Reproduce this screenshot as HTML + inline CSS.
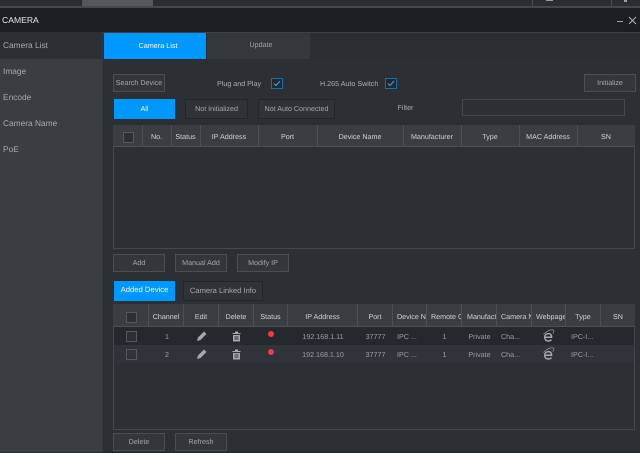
<!DOCTYPE html>
<html><head><meta charset="utf-8"><style>
html,body{margin:0;padding:0;background:#2c2f33}
body{width:640px;height:453px;position:relative;overflow:hidden;font-family:"Liberation Sans",sans-serif;font-size:7.15px;color:#acafb3;text-rendering:geometricPrecision}
div{position:absolute;box-sizing:border-box}
.t{white-space:nowrap;text-align:center;line-height:12px}
.b{border:1px solid #4a4d51;background:#33363a;text-align:center;color:#a4a7ac;white-space:nowrap}
.bl{background:#0098ff;color:#eef8ff;text-align:center;white-space:nowrap}
.s{left:3px;font-size:8.35px;color:#a6a9ad;line-height:12px}
.h{top:0;height:100%;background:#4c4f53;width:1px}
.c{height:12px;line-height:12px;text-align:center;white-space:nowrap;color:#d0d2d6;overflow:hidden}
.r{color:#9c9fa3;text-align:center;white-space:nowrap;line-height:12px;height:12px;overflow:hidden}
.cb{width:11px;height:11px;border:1px solid #55585c;background:#2c2f33}
.ck{width:12px;height:11px;border:1px solid #1b6da8;background:#24282c}
</style></head><body>
<div style="left:0;top:0;width:640px;height:6px;background:#2a2d31"></div>
<div style="left:82px;top:0;width:71px;height:6px;background:#56585c"></div>
<div style="left:532px;top:0;width:1px;height:6px;background:#4a4d51"></div>
<div style="left:611px;top:0;width:1px;height:6px;background:#4a4d51"></div>
<div style="left:546px;top:0;width:7px;height:1px;background:#9a9da0"></div>
<div style="left:624px;top:0;width:3px;height:2px;background:#9a9da0"></div>
<div style="left:0;top:6px;width:640px;height:2px;background:#44474b"></div>
<div style="left:0;top:8px;width:640px;height:24px;background:#1c1f22"></div>
<div class="t" style="left:2px;top:14px;font-size:8.6px;color:#e6e8ea">CAMERA</div>
<div style="left:617px;top:21px;width:6px;height:1px;background:#a0a2a5"></div>
<svg style="position:absolute;left:628px;top:16px" width="9" height="9" viewBox="0 0 9 9"><path d="M1 1L8 8M8 1L1 8" stroke="#a8aaad" stroke-width="1.1" fill="none"/></svg>

<div style="left:0;top:32px;width:102px;height:421px;background:#3a3d41"></div>
<div style="left:0;top:32px;width:102px;height:27px;background:#2c2f33"></div>
<div style="left:102px;top:32px;width:1px;height:421px;background:#33363a"></div>
<div class="s" style="top:39px">Camera List</div>
<div class="s" style="top:65px">Image</div>
<div class="s" style="top:91px">Encode</div>
<div class="s" style="top:117px">Camera Name</div>
<div class="s" style="top:143px">PoE</div>

<div style="left:103px;top:32px;width:537px;height:1px;background:#3e4145"></div>
<div style="left:103px;top:33px;width:537px;height:26px;background:#2a2d31"></div>
<div class="bl" style="left:104px;top:33px;width:102px;height:26px;line-height:25px;padding-left:6px;font-size:7.25px">Camera List</div>
<div style="left:207px;top:33px;width:103px;height:26px;background:#34373b;line-height:25px;text-align:center;color:#a0a3a7;padding-left:5px">Update</div>

<div class="b" style="left:113px;top:74px;width:52px;height:18px;line-height:17px">Search Device</div>
<div class="t" style="left:217px;top:78px;width:42px">Plug and Play</div>
<div class="ck" style="left:271px;top:78px"></div>
<svg style="position:absolute;left:271px;top:78px" width="12" height="11" viewBox="0 0 12 11"><path d="M3 5.5L5 7.5L9 3" stroke="#2a9ef0" stroke-width="1.2" fill="none"/></svg>
<div class="t" style="left:320px;top:78px;width:56px">H.265 Auto Switch</div>
<div class="ck" style="left:385px;top:78px"></div>
<svg style="position:absolute;left:385px;top:78px" width="12" height="11" viewBox="0 0 12 11"><path d="M3 5.5L5 7.5L9 3" stroke="#2a9ef0" stroke-width="1.2" fill="none"/></svg>
<div class="b" style="left:584px;top:74px;width:52px;height:18px;line-height:17px">Initialize</div>

<div class="bl" style="left:114px;top:99px;width:61px;height:20px;line-height:20px">All</div>
<div class="b" style="left:185px;top:99px;width:63px;height:20px;line-height:19px;background:#2f3236;border-color:#232629">Not Initialized</div>
<div class="b" style="left:258px;top:99px;width:77px;height:20px;line-height:19px;background:#2f3236;border-color:#232629">Not Auto Connected</div>
<div class="t" style="left:397px;top:102px;width:17px">Filter</div>
<div style="left:462px;top:99px;width:163px;height:17px;border:1px solid #44474b"></div>

<div style="left:113px;top:125px;width:522px;height:124px;border:1px solid #44474b"></div>
<div style="left:113px;top:125px;width:522px;height:22px;background:#3a3d41;border-bottom:1px solid #4c4f53">
<div class="h" style="left:29px"></div><div class="h" style="left:58px"></div><div class="h" style="left:87px"></div><div class="h" style="left:145px"></div><div class="h" style="left:204px"></div><div class="h" style="left:290px"></div><div class="h" style="left:348px"></div><div class="h" style="left:406px"></div><div class="h" style="left:464px"></div>
<div class="c" style="left:29px;top:6px;width:29px">No.</div>
<div class="c" style="left:58px;top:6px;width:29px">Status</div>
<div class="c" style="left:87px;top:6px;width:58px">IP Address</div>
<div class="c" style="left:145px;top:6px;width:59px">Port</div>
<div class="c" style="left:204px;top:6px;width:86px">Device Name</div>
<div class="c" style="left:290px;top:6px;width:58px">Manufacturer</div>
<div class="c" style="left:348px;top:6px;width:58px">Type</div>
<div class="c" style="left:406px;top:6px;width:58px">MAC Address</div>
<div class="c" style="left:464px;top:6px;width:58px">SN</div>
<div class="cb" style="left:10px;top:7px"></div>
</div>

<div class="b" style="left:113px;top:254px;width:52px;height:18px;line-height:16px">Add</div>
<div class="b" style="left:175px;top:254px;width:52px;height:18px;line-height:16px">Manual Add</div>
<div class="b" style="left:237px;top:254px;width:52px;height:18px;line-height:16px">Modify IP</div>
<div class="bl" style="left:114px;top:281px;width:61px;height:20px;line-height:18px;font-size:7.7px">Added Device</div>
<div class="b" style="left:183px;top:281px;width:80px;height:20px;line-height:17px;background:#2f3236;border-color:#232629;font-size:7.6px">Camera Linked Info</div>

<div style="left:113px;top:304px;width:522px;height:126px;border:1px solid #44474b"></div>
<div style="left:113px;top:304px;width:522px;height:23px;background:#3a3d41;border-bottom:1px solid #4c4f53">
<div class="h" style="left:35px"></div><div class="h" style="left:70px"></div><div class="h" style="left:105px"></div><div class="h" style="left:140px"></div><div class="h" style="left:174px"></div><div class="h" style="left:244px"></div><div class="h" style="left:279px"></div><div class="h" style="left:313px"></div><div class="h" style="left:348px"></div><div class="h" style="left:383px"></div><div class="h" style="left:418px"></div><div class="h" style="left:452px"></div><div class="h" style="left:487px"></div>
<div class="c" style="left:36px;top:7px;width:34px">Channel</div>
<div class="c" style="left:71px;top:7px;width:34px">Edit</div>
<div class="c" style="left:106px;top:7px;width:34px">Delete</div>
<div class="c" style="left:141px;top:7px;width:33px">Status</div>
<div class="c" style="left:175px;top:7px;width:69px">IP Address</div>
<div class="c" style="left:245px;top:7px;width:34px">Port</div>
<div class="c" style="left:280px;top:7px;width:33px;text-align:left;padding-left:4px">Device Name</div>
<div class="c" style="left:314px;top:7px;width:34px;text-align:left;padding-left:4px">Remote Channel</div>
<div class="c" style="left:349px;top:7px;width:34px;text-align:left;padding-left:5px">Manufacturer</div>
<div class="c" style="left:384px;top:7px;width:34px;text-align:left;padding-left:4px">Camera Name</div>
<div class="c" style="left:419px;top:7px;width:33px;text-align:left;padding-left:4px">Webpage</div>
<div class="c" style="left:453px;top:7px;width:34px">Type</div>
<div class="c" style="left:488px;top:7px;width:34px">SN</div>
<div class="cb" style="left:13px;top:8px"></div>
</div>

<div style="left:114px;top:327px;width:520px;height:18px;background:#25282c">
<div class="cb" style="left:12px;top:4px"></div>
<div class="r" style="left:36px;top:4px;width:34px">1</div>
<svg style="position:absolute;left:82px;top:3px" width="12" height="12" viewBox="0 0 12 12"><path d="M1 11L2 7.5L8 1.5L10.5 4L4.5 10Z" fill="#a6a8ac"/></svg>
<svg style="position:absolute;left:118px;top:4px" width="9" height="11" viewBox="0 0 9 11"><path d="M3 0.5H6V2H8.5V3H0.5V2H3Z" fill="#a6a8ac"/><path d="M1 4H8V10.5H1Z" fill="#a6a8ac"/><path d="M2.5 6H6.5M2.5 8H6.5" stroke="#25282c" stroke-width="0.9"/></svg>
<div style="left:154px;top:4px;width:6px;height:6px;border-radius:50%;background:#f23c45"></div>
<div class="r" style="left:174px;top:4px;width:70px">192.168.1.11</div>
<div class="r" style="left:244px;top:4px;width:35px">37777</div>
<div class="r" style="left:283px;top:4px;width:30px;text-align:left">IPC ...</div>
<div class="r" style="left:313px;top:4px;width:35px">1</div>
<div class="r" style="left:348px;top:4px;width:35px">Private</div>
<div class="r" style="left:387px;top:4px;width:30px;text-align:left">Cha...</div>
<svg style="position:absolute;left:428px;top:2px" width="13" height="14" viewBox="0 0 13 14"><path d="M3 8.2H9.6C9.6 5.8 8.3 4.6 6.4 4.6C4.2 4.6 2.7 6.2 2.7 8.4C2.7 10.6 4.3 12 6.3 12C7.7 12 8.7 11.5 9.4 10.6" stroke="#a6a8ac" stroke-width="1.5" fill="none"/><path d="M1.5 5.5C5 1.5 10 0 11.5 1.2C12.3 2 11.6 3.4 10.7 4.5" stroke="#8f9296" stroke-width="0.8" fill="none"/></svg>
<div class="r" style="left:457px;top:4px;width:30px;text-align:left">IPC-I...</div>
</div>

<div style="left:114px;top:345px;width:520px;height:18px;background:#30343a">
<div class="cb" style="left:12px;top:4px;background:#30343a"></div>
<div class="r" style="left:36px;top:4px;width:34px">2</div>
<svg style="position:absolute;left:82px;top:3px" width="12" height="12" viewBox="0 0 12 12"><path d="M1 11L2 7.5L8 1.5L10.5 4L4.5 10Z" fill="#a6a8ac"/></svg>
<svg style="position:absolute;left:118px;top:4px" width="9" height="11" viewBox="0 0 9 11"><path d="M3 0.5H6V2H8.5V3H0.5V2H3Z" fill="#a6a8ac"/><path d="M1 4H8V10.5H1Z" fill="#a6a8ac"/><path d="M2.5 6H6.5M2.5 8H6.5" stroke="#30343a" stroke-width="0.9"/></svg>
<div style="left:154px;top:4px;width:6px;height:6px;border-radius:50%;background:#f23c45"></div>
<div class="r" style="left:174px;top:4px;width:70px">192.168.1.10</div>
<div class="r" style="left:244px;top:4px;width:35px">37777</div>
<div class="r" style="left:283px;top:4px;width:30px;text-align:left">IPC ...</div>
<div class="r" style="left:313px;top:4px;width:35px">1</div>
<div class="r" style="left:348px;top:4px;width:35px">Private</div>
<div class="r" style="left:387px;top:4px;width:30px;text-align:left">Cha...</div>
<svg style="position:absolute;left:428px;top:2px" width="13" height="14" viewBox="0 0 13 14"><path d="M3 8.2H9.6C9.6 5.8 8.3 4.6 6.4 4.6C4.2 4.6 2.7 6.2 2.7 8.4C2.7 10.6 4.3 12 6.3 12C7.7 12 8.7 11.5 9.4 10.6" stroke="#a6a8ac" stroke-width="1.5" fill="none"/><path d="M1.5 5.5C5 1.5 10 0 11.5 1.2C12.3 2 11.6 3.4 10.7 4.5" stroke="#8f9296" stroke-width="0.8" fill="none"/></svg>
<div class="r" style="left:457px;top:4px;width:30px;text-align:left">IPC-I...</div>
</div>

<div class="b" style="left:113px;top:433px;width:52px;height:18px;line-height:17px">Delete</div>
<div class="b" style="left:175px;top:433px;width:52px;height:18px;line-height:17px">Refresh</div>
<div style="left:0;top:452px;width:640px;height:1px;background:#1c2a36"></div>
</body></html>
